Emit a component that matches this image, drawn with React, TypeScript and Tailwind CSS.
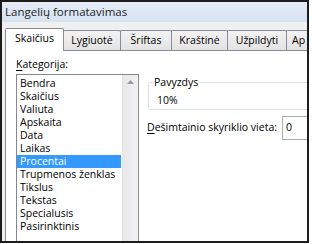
const CATEGORIES = [
  "Bendra",
  "Skaičius",
  "Valiuta",
  "Apskaita",
  "Data",
  "Laikas",
  "Procentai",
  "Trupmenos ženklas",
  "Tikslus",
  "Tekstas",
  "Specialusis",
  "Pasirinktinis",
];

const TABS = [
  { label: "Lygiuotė", w: "w-[58px] justify-center" },
  { label: "Šriftas", w: "w-[52px] justify-center" },
  { label: "Kraštinė", w: "w-[57px] justify-center" },
  { label: "Užpildyti", w: "w-[60px] justify-center" },
  { label: "Ap", w: "w-[40px] justify-start pl-[5px]" },
];

export default function App() {
  return (
    <div className="w-[312px] h-[244px] bg-white font-['Open_Sans',sans-serif] text-[10.5px] text-black">
      <div className="w-[309px] h-[243px] border-2 border-[#1c1c1c] overflow-hidden flex flex-col bg-[#f0f0f0]">
        {/* title bar */}
        <div className="h-[20px] shrink-0 flex items-center pl-[3px] bg-gradient-to-b from-[#e4ecf6] to-[#d6e2f0] text-[11.5px] text-[#1e1e1e]">
          Langelių formatavimas
        </div>

        {/* tabs */}
        <div className="mt-[6px] ml-[3px] h-[22px] shrink-0 flex items-end">
          <div className="relative z-10 -mb-px w-[59px] h-[23px] shrink-0 bg-white border border-b-0 border-[#898c95] rounded-t-[2px] flex items-center justify-center pb-[3px]">
            Skaičius
          </div>
          {TABS.map((t) => (
            <div
              key={t.label}
              className={`${t.w} h-[20px] shrink-0 -ml-px first:ml-0 border border-b-0 border-[#898c95] rounded-t-[2px] bg-gradient-to-b from-[#f3f3f3] to-[#e3e3e3] flex items-center whitespace-nowrap`}
            >
              {t.label}
            </div>
          ))}
        </div>

        {/* panel */}
        <div className="ml-[3px] w-[340px] flex-1 bg-white border border-[#898c95] flex">
          <div className="pl-[10px] pt-[7px] flex flex-col">
            <div className="leading-[13px] h-[13px]">
              <span className="underline underline-offset-[2px]">K</span>ategorija:
            </div>
            <div className="mt-[3px] w-[123px] h-[200px] border border-[#828790] flex">
              <div className="flex-1 pt-[2px] pr-px">
                {CATEGORIES.map((c) => (
                  <div
                    key={c}
                    className={`h-[13px] leading-[13px] pl-[3px] whitespace-nowrap ${
                      c === "Procentai" ? "bg-[#3399ff] text-white" : ""
                    }`}
                  >
                    {c}
                  </div>
                ))}
              </div>
              <div className="w-[16px] shrink-0 bg-gradient-to-r from-[#e8e8e8] to-[#f1f1f1] border-l border-[#e2e2e2] flex justify-center pt-[5px]">
                <svg width="7" height="4" viewBox="0 0 7 4">
                  <path d="M0 4 L3.5 0 L7 4 Z" fill="#9a9a9a" />
                </svg>
              </div>
            </div>
          </div>

          <div className="ml-[9px] pt-[24px] flex flex-col w-[200px]">
            <fieldset className="border border-[#d5dfe5] rounded-[3px] pl-[8px] pb-[1px] h-[35px]">
              <legend className="ml-[-4px] px-[1px] leading-[14px]">Pavyzdys</legend>
              <div className="pt-[5px] leading-[13px]">10%</div>
            </fieldset>
            <div className="mt-[6px] -ml-px h-[24px] flex items-center">
              <div className="w-[135px] shrink-0 whitespace-nowrap">
                <span className="underline underline-offset-[2px]">D</span>ešimtainio skyriklio vieta:
              </div>
              <div className="h-[24px] flex-1 border border-[#abadb3] flex items-center pl-[3px]">0</div>
            </div>
          </div>
        </div>
      </div>
    </div>
  );
}
